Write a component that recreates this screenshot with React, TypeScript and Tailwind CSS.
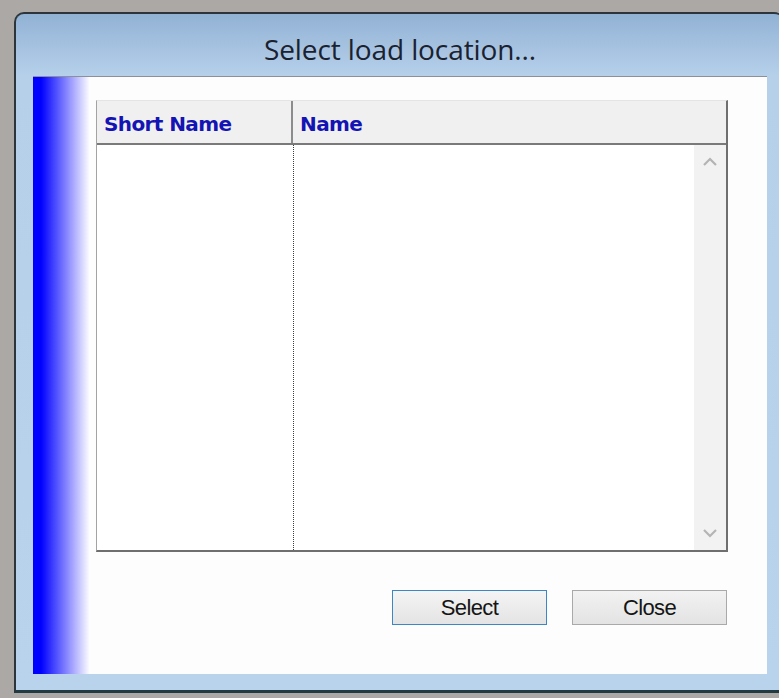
import React from 'react'

function Chevron({ up }: { up?: boolean }) {
  return (
    <svg width="16" height="10" viewBox="0 0 16 10">
      <path
        d={up ? 'M2 8 L8 2 L14 8' : 'M2 2 L8 8 L14 2'}
        fill="none"
        stroke="#b4b4b4"
        strokeWidth="2.2"
      />
    </svg>
  )
}

export default function App() {
  return (
    <div className="w-[779px] h-[698px] overflow-hidden bg-[#aba8a6] pt-[12px] pl-[14px]">
      {/* window frame */}
      <div className="w-[770px] h-[681px] border-t-2 border-l-2 border-b-[3px] border-[#2c363a] border-b-[#233a40] rounded-tl-[10px] rounded-tr-[10px] bg-[linear-gradient(to_bottom,#92b2d5_0px,#b6d0ea_62px,#bad3ec_100%)] flex flex-col">
        <div className="h-[62px] flex items-center justify-center pt-[8px]">
          <span className="text-[28px] text-[#1a2230] font-['Open_Sans',sans-serif] tracking-[-0.1px]">
            Select load location...
          </span>
        </div>

        {/* client area */}
        <div className="h-[598px] ml-[17px] mr-[17px] border-t border-[#8a9198] bg-[#fdfdfd] flex">
          <div className="w-[57px] h-full bg-[linear-gradient(to_right,#0000ff_14%,#ffffff_100%)]" />

          <div className="pl-[6px] pt-[23px] flex flex-col">
            {/* list view */}
            <div className="w-[632px] h-[452px] border-l border-t border-l-[#a3a3a3] border-t-[#e4e4e4] border-r-2 border-b-2 border-r-[#6f6f6f] border-b-[#6f6f6f] bg-white flex flex-col">
              <div className="h-[44px] flex bg-[#f0f0f0] border-b-2 border-[#7a7a7a] font-['DejaVu_Sans',sans-serif] font-bold text-[20px] text-[#1414b4] tracking-[-0.6px]">
                <div className="w-[196px] border-r-2 border-[#8c8c8c] flex items-center pl-[7px] pt-[3px]">Short Name</div>
                <div className="flex-1 flex items-center pl-[7px] pt-[3px]">Name</div>
              </div>
              <div className="flex-1 flex">
                <div className="w-[197px] border-r border-dotted border-[#3c3c3c]" />
                <div className="flex-1" />
                <div className="w-[32px] bg-[#f2f2f2] flex flex-col items-center justify-between pt-[12px] pb-[12px]">
                  <Chevron up />
                  <Chevron />
                </div>
              </div>
            </div>

            <div className="mt-[38px] flex justify-end gap-[25px] pr-[1px] font-['Liberation_Sans',sans-serif] text-[22px] text-[#151515] tracking-[-0.6px]">
              <button className="w-[155px] h-[35px] border border-[#3d86c6] bg-[linear-gradient(to_bottom,#f4f4f4,#e4e4e4)] flex items-center justify-center">
                Select
              </button>
              <button className="w-[155px] h-[35px] border border-[#a9a9a9] bg-[linear-gradient(to_bottom,#f2f2f2,#e3e3e3)] flex items-center justify-center">
                Close
              </button>
            </div>
          </div>
        </div>
      </div>
    </div>
  )
}
